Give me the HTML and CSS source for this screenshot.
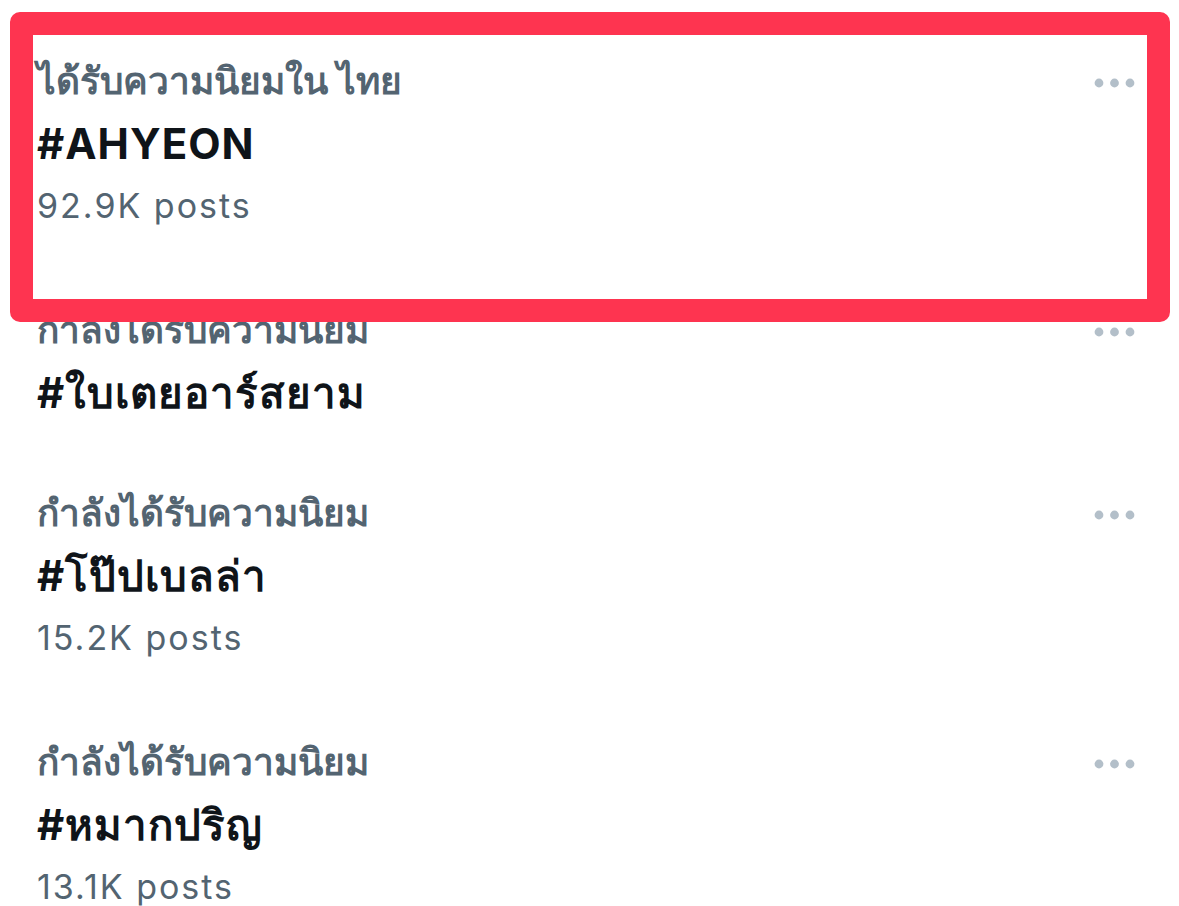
FILE: index.html
```html
<!DOCTYPE html>
<html lang="th">
<head>
    <meta charset="UTF-8">
    <meta name="viewport" content="width=device-width, initial-scale=1.0">
    <title>Trends</title>
    <link rel="stylesheet" href="styles.css">
</head>
<body>
    <div class="trends">
        <div class="trend">
            <div class="trend-head">
                <span class="trend-label">ได้รับความนิยมใน ไทย</span>
                <button class="more" aria-label="More">
                    <svg width="42" height="10" viewBox="0 0 42 10"><circle cx="5" cy="5" r="4.4"/><circle cx="20.5" cy="5" r="4.4"/><circle cx="36" cy="5" r="4.4"/></svg>
                </button>
            </div>
            <div class="trend-name">#AHYEON</div>
            <div class="trend-count">92.9K posts</div>
        </div>

        <div class="trend">
            <div class="trend-head">
                <span class="trend-label">กำลังได้รับความนิยม</span>
                <button class="more" aria-label="More">
                    <svg width="42" height="10" viewBox="0 0 42 10"><circle cx="5" cy="5" r="4.4"/><circle cx="20.5" cy="5" r="4.4"/><circle cx="36" cy="5" r="4.4"/></svg>
                </button>
            </div>
            <div class="trend-name">#ใบเตยอาร์สยาม</div>
        </div>

        <div class="trend">
            <div class="trend-head">
                <span class="trend-label">กำลังได้รับความนิยม</span>
                <button class="more" aria-label="More">
                    <svg width="42" height="10" viewBox="0 0 42 10"><circle cx="5" cy="5" r="4.4"/><circle cx="20.5" cy="5" r="4.4"/><circle cx="36" cy="5" r="4.4"/></svg>
                </button>
            </div>
            <div class="trend-name">#โป๊ปเบลล่า</div>
            <div class="trend-count">15.2K posts</div>
        </div>

        <div class="trend">
            <div class="trend-head">
                <span class="trend-label">กำลังได้รับความนิยม</span>
                <button class="more" aria-label="More">
                    <svg width="42" height="10" viewBox="0 0 42 10"><circle cx="5" cy="5" r="4.4"/><circle cx="20.5" cy="5" r="4.4"/><circle cx="36" cy="5" r="4.4"/></svg>
                </button>
            </div>
            <div class="trend-name">#หมากปริญ</div>
            <div class="trend-count">13.1K posts</div>
        </div>

        <div class="highlight"></div>
    </div>
</body>
</html>
```

FILE: styles.css
```css
body {
    margin: 0;
    background: #fff;
    font-family: Inter, "Noto Sans", "DejaVu Sans", sans-serif;
    color: #0f1419;
}

.trends {
    position: relative;
    padding-top: 18px;
}

.trend {
    padding: 28px 43px 28px 37px;
}

.trend-head {
    display: flex;
    align-items: center;
    justify-content: space-between;
}

.trend-label {
    font-size: 37px;
    line-height: 69px;
    font-weight: 600;
    color: #536471;
}

.more {
    border: none;
    background: none;
    padding: 0;
    margin-top: 4px;
    display: flex;
}

.more svg {
    fill: #b3bfc9;
}

.trend-name {
    font-size: 42px;
    line-height: 58px;
    font-weight: 700;
    letter-spacing: 1px;
}

.trend-count {
    font-size: 34px;
    line-height: 66px;
    letter-spacing: 2px;
    color: #536471;
}

.highlight {
    position: absolute;
    left: 10px;
    top: 12px;
    width: 1160px;
    height: 310px;
    box-sizing: border-box;
    border: 23px solid #fe3450;
    border-radius: 10px;
}
```
